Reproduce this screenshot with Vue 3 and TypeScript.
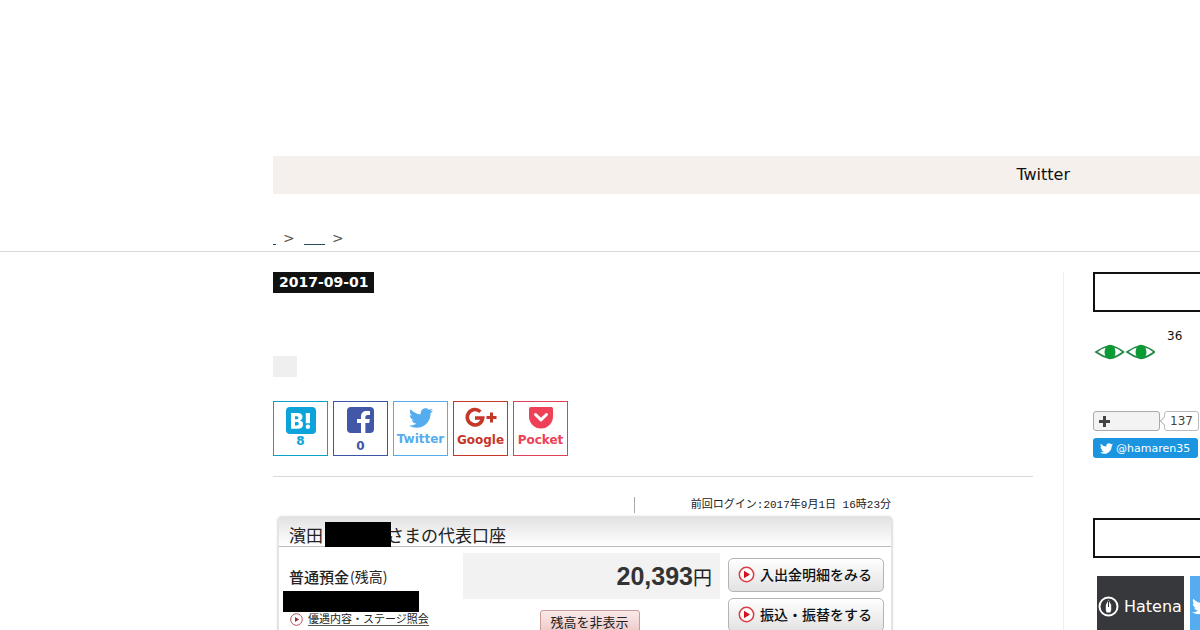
<script setup lang="ts">
interface Share {
  key: string
  label: string
  title: string
}

const shares: Share[] = [
  { key: 'hatena', label: '8', title: 'Hatena Bookmark' },
  { key: 'facebook', label: '0', title: 'Facebook' },
  { key: 'twitter', label: 'Twitter', title: 'Twitter' },
  { key: 'google', label: 'Google', title: 'Google+' },
  { key: 'pocket', label: 'Pocket', title: 'Pocket' },
]

const actions: string[] = ['入出金明細をみる', '振込・振替をする']

const bird =
  'M23.954 4.569c-.885.389-1.83.654-2.825.775 1.014-.611 1.794-1.574 2.163-2.723-.951.555-2.005.959-3.127 1.184-.896-.959-2.173-1.559-3.591-1.559-2.717 0-4.92 2.203-4.92 4.917 0 .39.045.765.127 1.124C7.691 8.094 4.066 6.13 1.64 3.161c-.427.722-.666 1.561-.666 2.475 0 1.71.87 3.213 2.188 4.096-.807-.026-1.566-.248-2.228-.616v.061c0 2.385 1.693 4.374 3.946 4.827-.413.111-.849.171-1.296.171-.314 0-.615-.03-.916-.086.631 1.953 2.445 3.377 4.604 3.417-1.68 1.319-3.809 2.105-6.102 2.105-.39 0-.779-.023-1.17-.067 2.189 1.394 4.768 2.209 7.557 2.209 9.054 0 13.999-7.496 13.999-13.986 0-.209 0-.42-.015-.63.961-.689 1.8-1.56 2.46-2.548z'
</script>

<template>
  <div class="page">
    <header class="top">
      <nav class="nav"><a href="#">Twitter</a></nav>
    </header>

    <nav class="crumbs" aria-label="Breadcrumb">
      <a href="#" class="crumb-home" aria-label="Top"></a>
      <span>&gt;</span>
      <a href="#" class="crumb-cat" aria-label="Category"></a>
      <span>&gt;</span>
    </nav>

    <div class="columns">
      <main class="main">
        <a href="#" class="date"><time datetime="2017-09-01">2017-09-01</time></a>
        <div class="tag"></div>

        <div class="shares">
          <a v-for="s in shares" :key="s.key" href="#" class="share" :class="s.key" :aria-label="s.title">
            <svg v-if="s.key === 'hatena'" width="30" height="27" viewBox="0 0 30 27">
              <rect width="30" height="27" rx="4" fill="currentColor" />
              <path fill="#fff" fill-rule="evenodd" d="M5 6h6.500c3.300 0 5 1.300 5 3.900 0 2-1 3-2.700 3.500 2.200.4 3.300 1.700 3.300 3.900 0 3-2 4.500-5.400 4.500H5zM9 9.200v3h1.500c1.300 0 1.900-.5 1.900-1.500s-.6-1.500-1.900-1.500zM9 15v3.500h1.700c1.400 0 2.100-.6 2.100-1.700 0-1.200-.7-1.800-2.100-1.800zM19.800 6H24v10.300h-4.200z" />
              <circle cx="21.900" cy="19.700" r="2.200" fill="#fff" />
            </svg>
            <svg v-else-if="s.key === 'facebook'" width="27" height="26" viewBox="0 0 27 26">
              <rect width="27" height="26" rx="4" fill="currentColor" />
              <path fill="#fff" d="M14 26V16h-4v-4h4V9.500C14 6 16.200 4 19.500 4H23v4h-2.200C19 8 18.400 8.700 18.400 10v2h4.400l-.6 4h-3.800v10z" />
            </svg>
            <svg v-else-if="s.key === 'twitter'" width="24" height="24" viewBox="0 0 24 24">
              <path fill="currentColor" :d="bird" />
            </svg>
            <svg v-else-if="s.key === 'google'" width="32" height="22" viewBox="0 0 32 22">
              <path fill="none" stroke="currentColor" stroke-width="3.600" d="M15.400 4.700A7.700 7.700 0 1 0 17.700 11H10" />
              <path fill="none" stroke="currentColor" stroke-width="3" d="M21.500 10.500h10M26.500 5.500v10" />
            </svg>
            <svg v-else width="24" height="22" viewBox="0 0 24 22">
              <path fill="currentColor" d="M2.500 0h19A2.300 2.300 0 0 1 24 2.400V9.500a12 12 0 0 1-24 0V2.400A2.300 2.300 0 0 1 2.500 0z" />
              <path fill="none" stroke="#fff" stroke-width="3" stroke-linecap="round" stroke-linejoin="round" d="M6.500 7.500l5.500 5.300 5.500-5.300" />
            </svg>
            <b>{{ s.label }}</b>
          </a>
        </div>

        <section class="bank" lang="ja">
          <p class="login"><span>前回ログイン:2017年9月1日 16時23分</span></p>
          <div class="account">
            <h2>濱田<i class="mask mask-name"></i>さまの代表口座</h2>
            <div class="account-body">
              <div class="kind">
                <p><b>普通預金</b><small>(残高)</small></p>
                <i class="mask mask-number"></i>
                <a href="#">
                  <svg width="13" height="13" viewBox="0 0 13 13">
                    <circle cx="6.500" cy="6.500" r="5.800" fill="#fff" stroke="#b8505a" />
                    <path fill="#a22a35" d="M5 4l4 2.500L5 9z" />
                  </svg>
                  <span>優遇内容・ステージ照会</span>
                </a>
              </div>
              <div class="balance">
                <p><strong>20,393</strong>円</p>
                <button type="button">残高を非表示</button>
              </div>
              <div class="actions">
                <button v-for="a in actions" :key="a" type="button">
                  <svg width="17" height="17" viewBox="0 0 17 17">
                    <circle cx="8.500" cy="8.500" r="7.200" fill="#fff" stroke="#d63c43" stroke-width="1.500" />
                    <path fill="#d2141e" d="M6 4.800l6 3.700-6 3.700z" />
                  </svg>
                  {{ a }}
                </button>
              </div>
            </div>
          </div>
        </section>
      </main>

      <aside class="side">
        <div class="title-box"></div>
        <div class="readers">
          <svg width="62" height="18" viewBox="0 0 62 18">
            <g v-for="x in [0, 31]" :key="x" :transform="`translate(${x} 0)`">
              <path d="M3 9Q10 4 17 2.500Q24 4 30.500 9Q24 14 17 15.500Q10 14 3 9z" fill="#fff" stroke="#268747" stroke-width="1.600" />
              <ellipse cx="17" cy="9" rx="5.500" ry="7" fill="#0b9b35" />
            </g>
          </svg>
          <span>36</span>
        </div>
        <div class="subscribe">
          <button type="button" aria-label="Subscribe">
            <svg width="11" height="11" viewBox="0 0 11 11"><path d="M0 5.500h11M5.500 0v11" stroke="#444" stroke-width="3" /></svg>
          </button>
          <a href="#" class="count">137</a>
        </div>
        <a href="#" class="follow">
          <svg width="13" height="13" viewBox="0 0 24 24"><path fill="#fff" :d="bird" /></svg>
          @hamaren35
        </a>
        <div class="title-box second"></div>
        <div class="follow-row">
          <a href="#" class="big dark">
            <svg width="21" height="21" viewBox="0 0 21 21">
              <circle cx="10.500" cy="10.500" r="9" fill="none" stroke="#fff" stroke-width="2" />
              <path fill="#fff" d="M10.500 4L7.800 9v5l.8 2.500h3.800l.8-2.500V9z" />
              <path d="M10.500 5v6" stroke="#37383c" />
            </svg>
            Hatena
          </a>
          <a href="#" class="big blue" aria-label="Twitter">
            <svg width="20" height="20" viewBox="0 0 24 24"><path fill="#fff" :d="bird" /></svg>
          </a>
        </div>
      </aside>
    </div>
  </div>
</template>

<style>
body {
  margin: 0;
  overflow: hidden;
}
</style>

<style scoped>
* {
  box-sizing: border-box;
}
.page {
  height: 100vh;
  overflow: hidden;
  background: #fff;
  color: #111;
  font-family: "DejaVu Sans", "Noto Sans CJK JP", sans-serif;
  font-size: 16px;
}
a {
  color: inherit;
  text-decoration: none;
}
p,
h2 {
  margin: 0;
}
button {
  font-family: inherit;
  cursor: pointer;
}
svg {
  display: block;
  flex: none;
}
.top {
  padding: 156px 0 0 273px;
}
.nav {
  display: flex;
  justify-content: flex-end;
  padding-right: 130px;
  background: #f5f0eb;
  line-height: 38px;
}
.crumbs {
  display: flex;
  align-items: center;
  height: 58px;
  padding: 30px 0 0 273px;
  border-bottom: 1px solid #dadada;
  color: #555;
  font-size: 14px;
}
.crumbs a {
  height: 14px;
  border-bottom: 1px solid #2b4a5e;
}
.crumb-home {
  width: 3px;
}
.crumb-cat {
  width: 21px;
}
.crumbs span {
  width: 12px;
  margin: 0 9px 0 7px;
}
.columns {
  display: flex;
  min-width: 1110px;
  margin: 20px 0 0 273px;
}
.main {
  flex: 1;
  padding-right: 30px;
  border-right: 1px solid #eee;
}
.date {
  display: block;
  width: max-content;
  padding: 0 5px 0 6px;
  background: #111;
  color: #fff;
  font-size: 14px;
  font-weight: bold;
  line-height: 21px;
}
.tag {
  width: 24px;
  height: 21px;
  margin-top: 63px;
  background: #efefef;
}
.shares {
  display: flex;
  gap: 5px;
  margin-top: 24px;
  padding-bottom: 20px;
  border-bottom: 1px solid #dadada;
}
.share {
  display: flex;
  flex-direction: column;
  align-items: center;
  width: 55px;
  height: 55px;
  padding-top: 5px;
  border: 1px solid;
  font-size: 12px;
  line-height: 14px;
}
.share.hatena {
  color: #0ba3d9;
  border-color: #0ba3c9;
}
.share.facebook {
  color: #4257a5;
  border-color: #3c55a5;
}
.facebook b {
  margin-top: 6px;
}
.share.twitter {
  padding-top: 4px;
  color: #55acee;
  border-color: #55acee;
}
.twitter b {
  margin-top: 2px;
}
.share.google {
  color: #c53727;
  border-color: #c53727;
}
.google b,
.pocket b {
  margin-top: 4px;
}
.share.pocket {
  color: #ee4056;
  border-color: #e0405a;
}
.bank {
  width: 620px;
  margin-top: 20px;
  color: #222;
  font-family: "Noto Sans CJK JP", sans-serif;
}
.login {
  display: flex;
  justify-content: flex-end;
  padding-right: 2px;
  font-family: "Liberation Mono", "Noto Sans CJK JP", monospace;
  font-size: 11px;
  line-height: 16px;
}
.login span {
  padding-left: 56px;
  border-left: 1px solid #aaa;
}
.account {
  margin: 3px 0 0 4px;
  border: 1px solid #e4e4e4;
  border-width: 1px 2px 0;
  border-radius: 5px 5px 0 0;
  box-shadow: 0 0 2px #e4e4e4;
}
.account h2 {
  display: flex;
  align-items: center;
  height: 30px;
  padding: 6px 0 0 10px;
  border-bottom: 1px solid #bbb;
  background: linear-gradient(#e2e2e2, #fff);
  font-size: 17px;
  font-weight: 400;
  line-height: 24px;
}
.mask {
  display: block;
  background: #000;
}
.mask-name {
  width: 66px;
  height: 25px;
  margin-left: 2px;
  margin-right: -4px;
  z-index: 1;
}
.account-body {
  display: grid;
  grid-template-columns: 180px 257px 156px;
  padding: 6px 0 0 4px;
}
.kind p {
  display: flex;
  align-items: center;
  gap: 1px;
  height: 38px;
  padding: 8px 0 0 6px;
}
.kind b {
  font-size: 15px;
  font-weight: 500;
}
.kind small {
  font-size: 14px;
}
.mask-number {
  width: 136px;
  height: 21px;
}
.kind a {
  display: flex;
  align-items: center;
  gap: 5px;
  padding-left: 7px;
  font-size: 11px;
  line-height: 13px;
}
.kind a span {
  border-bottom: 1px solid #555;
}
.balance {
  display: flex;
  flex-direction: column;
  align-items: center;
}
.balance p {
  display: flex;
  align-items: center;
  justify-content: flex-end;
  width: 100%;
  height: 46px;
  padding-right: 8px;
  background: #f2f2f2;
  font-size: 19px;
}
.balance strong {
  color: #333;
  font-family: "Liberation Sans", sans-serif;
  font-size: 25px;
}
.balance button {
  width: 100px;
  height: 24px;
  margin-top: 11px;
  margin-right: 4px;
  padding: 0 0 2px;
  border: 1px solid #c99;
  border-radius: 3px;
  background: linear-gradient(#fbe9e9, #eec8c8);
  color: #222;
  font-size: 13px;
}
.actions {
  display: flex;
  flex-direction: column;
  gap: 6px;
  margin-left: 8px;
  margin-right: -8px;
  padding-top: 5px;
}
.actions button {
  display: flex;
  align-items: center;
  gap: 5px;
  height: 34px;
  padding: 0 0 2px 9px;
  border: 1px solid #b4b4b4;
  border-radius: 5px;
  background: linear-gradient(#fff, #e2e2e2);
  color: #111;
  font-size: 14px;
  font-weight: 500;
  white-space: nowrap;
}
.side {
  flex: 0 0 319px;
  padding-left: 29px;
}
.title-box {
  height: 40px;
  border: 2px solid #111;
}
.readers {
  display: flex;
  gap: 12px;
  height: 99px;
  padding-top: 15px;
  font-size: 12px;
  line-height: 18px;
}
.readers svg {
  margin-top: 16px;
}
.subscribe {
  display: flex;
  gap: 4px;
}
.subscribe button {
  width: 67px;
  height: 20px;
  padding: 0 0 0 5px;
  border: 1px solid #aaa;
  border-radius: 3px;
  background: #f3f3f3;
}
.count {
  position: relative;
  height: 20px;
  padding: 0 5px;
  border: 1px solid #bbb;
  border-radius: 3px;
  color: #444;
  font-size: 12px;
  line-height: 18px;
}
.count::before {
  content: "";
  position: absolute;
  top: 6px;
  left: -4px;
  width: 5px;
  height: 5px;
  border: 1px solid #bbb;
  border-width: 0 0 1px 1px;
  background: #fff;
  transform: rotate(45deg);
}
.follow {
  display: flex;
  align-items: center;
  gap: 3px;
  width: 105px;
  height: 20px;
  margin-top: 7px;
  padding-left: 7px;
  border-radius: 3px;
  background: #1b95e0;
  color: #fff;
  font-size: 11px;
}
.second {
  margin-top: 60px;
}
.follow-row {
  display: flex;
  gap: 6px;
  padding: 18px 0 0 4px;
}
.big {
  display: flex;
  align-items: center;
  gap: 5px;
  height: 60px;
  color: #fff;
}
.dark {
  width: 87px;
  padding-left: 1px;
  background: #37383c;
}
.blue {
  width: 87px;
  padding-left: 2px;
  background: #55acee;
}
</style>
